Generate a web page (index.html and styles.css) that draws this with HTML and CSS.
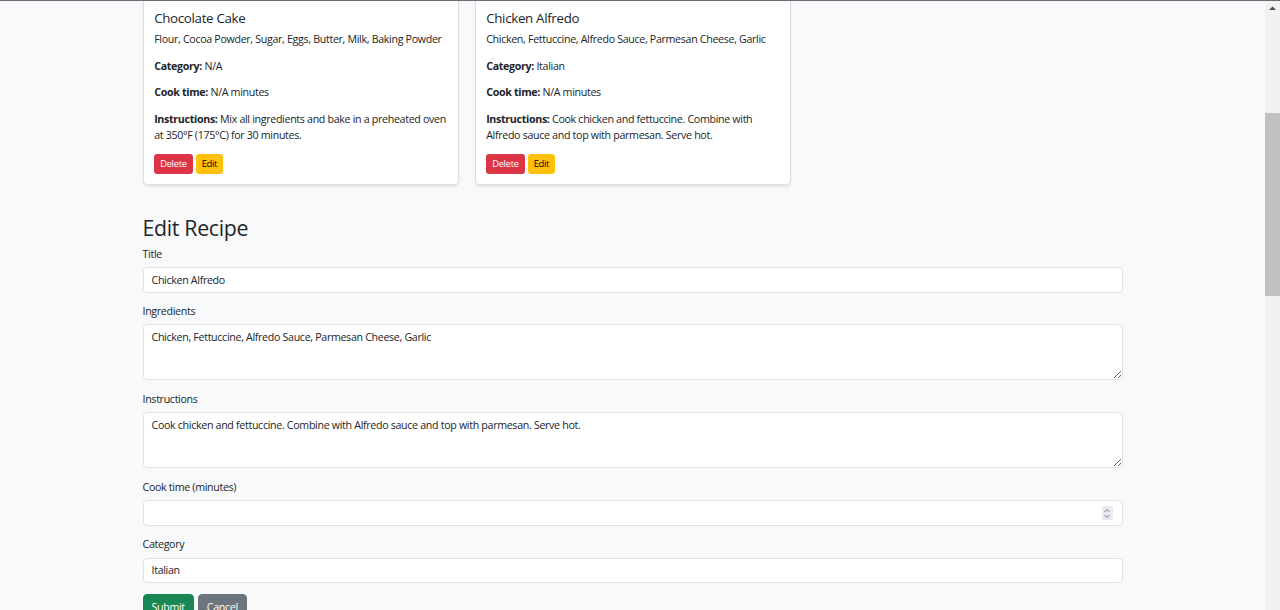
FILE: index.html
```html
<!DOCTYPE html>
<html lang="en">
<head>
<meta charset="utf-8">
<title>Recipes</title>
<link rel="stylesheet" href="styles.css">
</head>
<body>
<div class="window">
  <div class="viewport">
    <div class="container">
      <div class="cards">
        <div class="card">
          <h5 class="card-title">Chocolate Cake</h5>
          <p class="card-text">Flour, Cocoa Powder, Sugar, Eggs, Butter, Milk, Baking Powder</p>
          <p class="card-text"><strong>Category:</strong> N/A</p>
          <p class="card-text"><strong>Cook time:</strong> N/A minutes</p>
          <p class="card-text"><strong>Instructions:</strong> Mix all ingredients and bake in a preheated oven at 350°F (175°C) for 30 minutes.</p>
          <div class="btns">
            <button class="btn btn-sm btn-danger">Delete</button>
            <button class="btn btn-sm btn-warning">Edit</button>
          </div>
        </div>
        <div class="card">
          <h5 class="card-title">Chicken Alfredo</h5>
          <p class="card-text">Chicken, Fettuccine, Alfredo Sauce, Parmesan Cheese, Garlic</p>
          <p class="card-text"><strong>Category:</strong> Italian</p>
          <p class="card-text"><strong>Cook time:</strong> N/A minutes</p>
          <p class="card-text"><strong>Instructions:</strong> Cook chicken and fettuccine. Combine with Alfredo sauce and top with parmesan. Serve hot.</p>
          <div class="btns">
            <button class="btn btn-sm btn-danger">Delete</button>
            <button class="btn btn-sm btn-warning">Edit</button>
          </div>
        </div>
      </div>

      <h2 class="form-heading">Edit Recipe</h2>
      <form class="recipe-form">
        <div class="field">
          <label class="form-label">Title</label>
          <input class="form-control" type="text" value="Chicken Alfredo">
        </div>
        <div class="field">
          <label class="form-label">Ingredients</label>
          <textarea class="form-control area">Chicken, Fettuccine, Alfredo Sauce, Parmesan Cheese, Garlic</textarea>
        </div>
        <div class="field">
          <label class="form-label">Instructions</label>
          <textarea class="form-control area">Cook chicken and fettuccine. Combine with Alfredo sauce and top with parmesan. Serve hot.</textarea>
        </div>
        <div class="field">
          <label class="form-label">Cook time (minutes)</label>
          <div class="number-wrap">
            <input class="form-control" type="text" value="">
            <span class="spinner">
              <svg width="10" height="13" viewBox="0 0 10 13"><path d="M2.5 5 L5 2.5 L7.5 5" fill="none" stroke="#7a7a85" stroke-width="1"/><path d="M2.5 8 L5 10.5 L7.5 8" fill="none" stroke="#7a7a85" stroke-width="1"/></svg>
            </span>
          </div>
        </div>
        <div class="field">
          <label class="form-label">Category</label>
          <input class="form-control" type="text" value="Italian">
        </div>
        <div class="form-btns">
          <button class="btn btn-success" type="button">Submit</button>
          <button class="btn btn-secondary" type="button">Cancel</button>
        </div>
      </form>
    </div>
  </div>
  <div class="scrollbar">
    <div class="sb-arrow">
      <svg width="15" height="15" viewBox="0 0 15 15"><path d="M4 9 L7.5 5.5 L11 9 Z" fill="#505050"/></svg>
    </div>
    <div class="sb-thumb"></div>
  </div>
</div>
</body>
</html>
```

FILE: styles.css
```css
* { box-sizing: border-box; }
html, body { margin: 0; padding: 0; }
body {
  font-family: "Segoe UI", "Open Sans", "Noto Sans", sans-serif;
  font-size: 10.67px;
  line-height: 16px;
  letter-spacing: -0.03em;
  color: #212529;
  background: #f8f9fa;
}
.window {
  display: flex;
  width: 1280px;
  height: 610px;
  overflow: hidden;
  border-top: 1px solid #6b6b78;
}
.viewport {
  flex: 1;
  height: 609px;
  overflow: hidden;
  background: #f8f9fa;
}
.container {
  width: 980px;
  margin: -3px auto 0;
}
.cards {
  display: flex;
  gap: 16px;
}
.card {
  width: 316px;
  background: #fff;
  border: 1px solid #dcdee0;
  border-radius: 4px;
  box-shadow: 0 1.3px 2.7px rgba(0,0,0,.075);
  padding: 10.67px 10.67px 9.67px;
}
.card-title {
  font-size: 13.33px;
  font-weight: 400;
  line-height: 16px;
  margin: 0 0 5.33px;
}
.card-text {
  margin: 0 0 10.67px;
}
.card-text strong { font-weight: 700; }
.btns { display: flex; gap: 3px; }
.btn {
  font-family: inherit;
  letter-spacing: -0.03em;
  border: 1px solid transparent;
  border-radius: 4px;
  cursor: pointer;
}
.btn-sm {
  font-size: 9.33px;
  line-height: 14px;
  padding: 2.67px 5px;
  border-radius: 2.67px;
  height: 20.67px;
}
.btn-danger { background: #dc3545; color: #fff; border-color: #dc3545; }
.btn-warning { background: #ffc107; color: #000; border-color: #ffc107; }
.btn-success { background: #198754; color: #fff; border-color: #198754; }
.btn-secondary { background: #6c757d; color: #fff; border-color: #6c757d; }
.form-heading {
  font-size: 21.33px;
  font-weight: 400;
  line-height: 25.6px;
  margin: 30px 0 5.33px;
}
.field { margin-bottom: 10.67px; }
.form-label {
  display: block;
  margin-bottom: 5.33px;
}
.form-control {
  display: block;
  width: 100%;
  font-family: inherit;
  font-size: 10.67px;
  line-height: 16px;
  letter-spacing: -0.03em;
  color: #212529;
  background: #fff;
  border: 1px solid #dee2e6;
  border-radius: 4px;
  padding: 4px 8px;
  height: 25.33px;
  outline: none;
}
.area {
  height: 56px;
  resize: vertical;
}
.number-wrap { position: relative; }
.spinner {
  position: absolute;
  right: 10px;
  top: 6px;
  width: 11px;
  height: 14px;
  background: #e9e9ef;
  border-radius: 2px;
  display: flex;
  align-items: center;
  justify-content: center;
}
.form-btns { display: flex; gap: 4px; }
.form-btns .btn {
  font-size: 10.67px;
  line-height: 16px;
  padding: 4px 8px;
  height: 25.33px;
}
.scrollbar {
  width: 15px;
  height: 609px;
  background: #f1f1f1;
  display: flex;
  flex-direction: column;
}
.sb-arrow { height: 15px; display: flex; }
.sb-thumb {
  margin-top: 97px;
  height: 183px;
  background: #c1c1c1;
}
```
